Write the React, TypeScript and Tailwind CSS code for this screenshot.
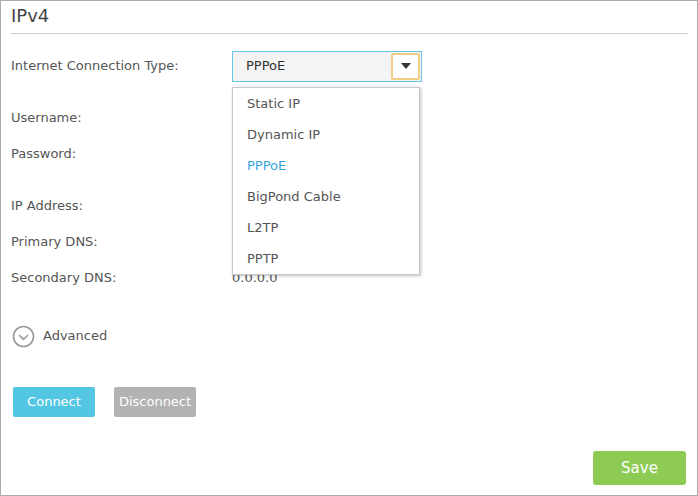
import { useState } from "react";

const options = ["Static IP", "Dynamic IP", "PPPoE", "BigPond Cable", "L2TP", "PPTP"];

const Row = ({ label, className, children }: { label: string; className?: string; children?: React.ReactNode }) => (
  <div className={"flex h-[36px] items-center " + (className ?? "")}>
    <div className="w-[221px] shrink-0">{label}</div>
    <div>{children}</div>
  </div>
);

const App = () => {
  const [type] = useState("PPPoE"); //選択中の接続タイプ

  return (
    <div
      className="h-[496px] w-[698px] border border-[#acacac] bg-white pl-[10px] pr-[9px] text-[13px] text-[#555]"
      style={{ fontFamily: '"DejaVu Sans", Verdana, sans-serif' }}
    >
      {/* タイトル */}
      <div className="flex h-[33px] items-center border-b border-[#cfcfcf] pb-[4px] text-[18px] text-[#444]">
        IPv4
      </div>

      <div className="relative pt-[14px]">
        <Row label="Internet Connection Type:">
          <div className="flex h-[31px] w-[190px] items-center justify-between border border-[#67c5e6] bg-[#f4f4f4] pr-[1px]">
            <span className="pl-[13px] text-[#333]">{type}</span>
            <span className="flex h-[27px] w-[29px] items-center justify-center rounded-[2px] border-2 border-[#f2cd85] bg-white">
              <svg width="10" height="6" viewBox="0 0 10 6">
                <path d="M0 0 H10 L5 6 Z" fill="#333" />
              </svg>
            </span>
          </div>
        </Row>

        {/* ドロップダウン */}
        <div className="absolute left-[221px] top-[53px] z-10 w-[188px] border border-[#c8c8c8] bg-white shadow-[1px_1px_3px_rgba(0,0,0,0.25)]">
          {options.map((o) => (
            <div key={o} className={"flex h-[31px] items-center pl-[14px] " + (o === type ? "text-[#37a6de]" : "text-[#555]")}>
              {o}
            </div>
          ))}
        </div>

        <Row label="Username:" className="mt-[16px]" />
        <Row label="Password:" />
        <Row label="IP Address:" className="mt-[16px]" />
        <Row label="Primary DNS:" />
        <Row label="Secondary DNS:">0.0.0.0</Row>

        {/* 詳細設定 */}
        <div className="mt-[22px] flex h-[36px] items-center">
          <svg width="23" height="23" viewBox="0 0 23 23" className="ml-[1px]">
            <circle cx="11.5" cy="11.5" r="10" fill="none" stroke="#9a9a9a" strokeWidth="1.6" />
            <path d="M7 10 L11.5 14.3 L16 10" fill="none" stroke="#9a9a9a" strokeWidth="1.6" />
          </svg>
          <span className="ml-[8px]">Advanced</span>
        </div>

        <div className="mt-[33px] flex gap-[19px] pl-[2px]">
          <button className="h-[30px] w-[82px] rounded-[2px] bg-[#52c6e2] text-white">Connect</button>
          <button className="h-[30px] w-[82px] rounded-[2px] bg-[#b3b3b3] text-white">Disconnect</button>
        </div>

        <div className="mt-[34px] flex justify-end pr-[2px]">
          <button className="h-[34px] w-[93px] rounded-[3px] bg-[#8ecb55] text-[15px] text-white">Save</button>
        </div>
      </div>
    </div>
  );
};

export default App;
